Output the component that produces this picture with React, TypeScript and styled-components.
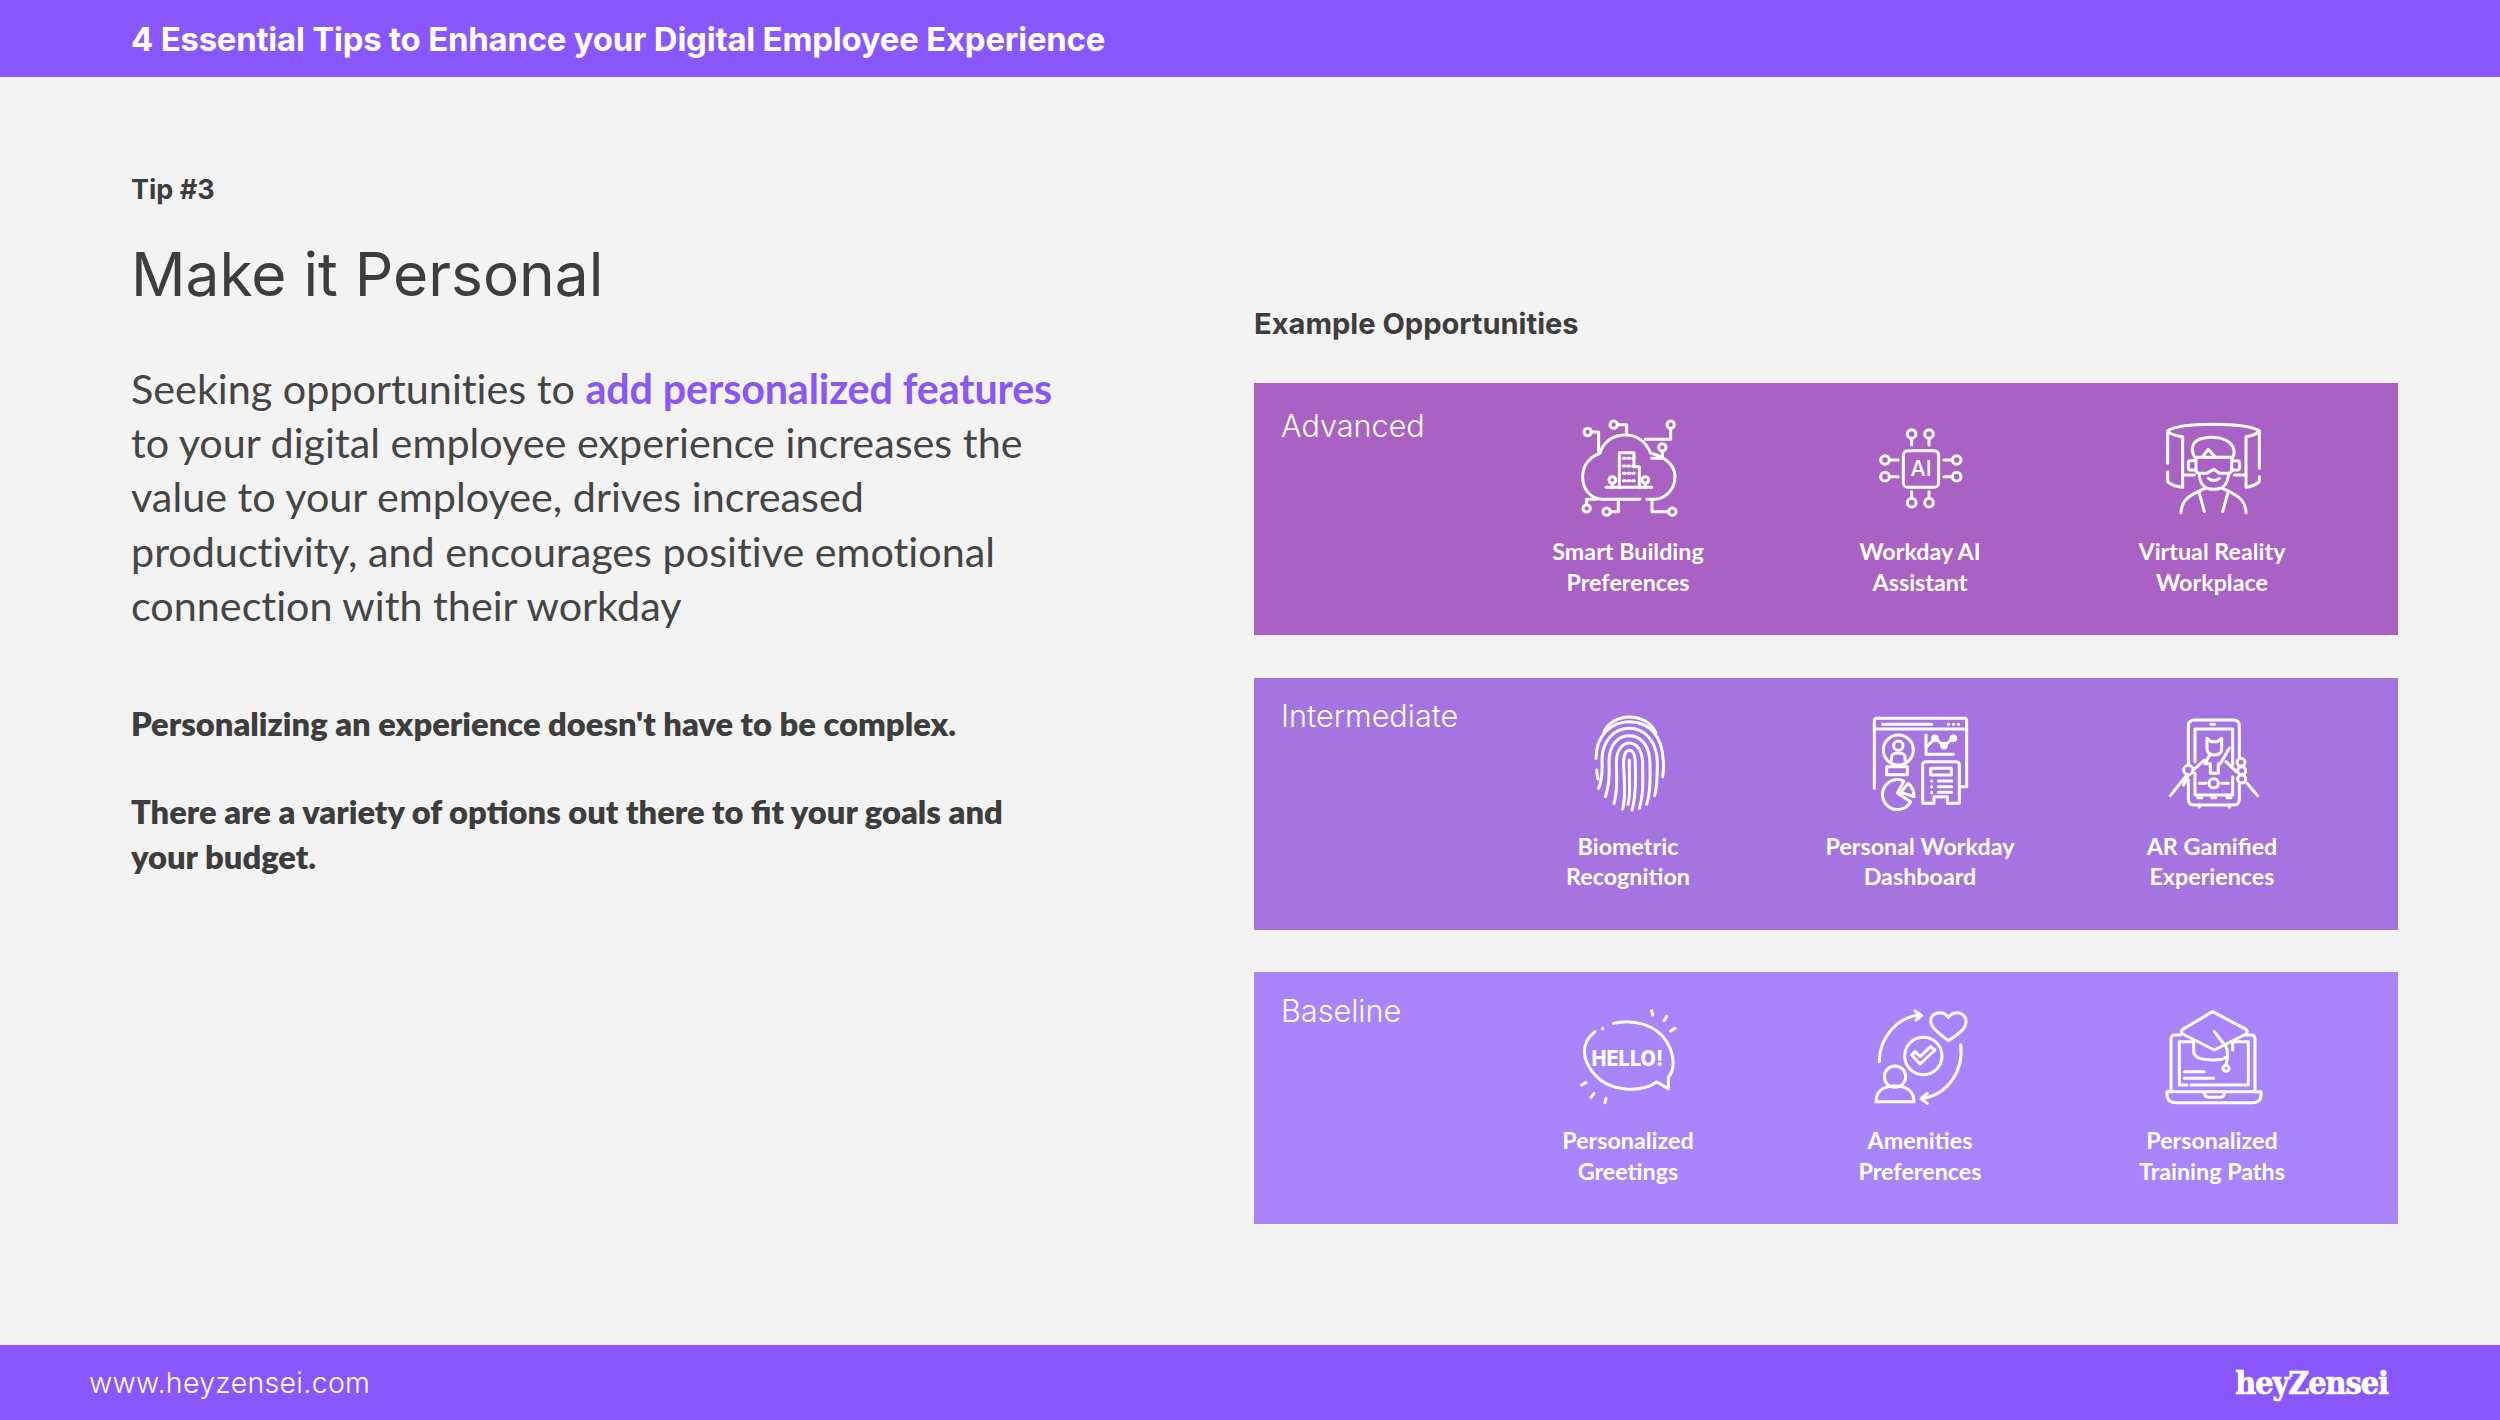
import React, { FC, ReactNode } from "react";
import styled, { createGlobalStyle } from "styled-components";

const GlobalStyle = createGlobalStyle`
  html, body {
    margin: 0;
    padding: 0;
    background: #f3f3f3;
  }
`;

// Icons are traced on a 480x360 grid (3 units per pixel)
const Icon: FC<{ x: number; y?: number; children: ReactNode }> = ({ x, y = 0, children }) => (
  <IconSvg viewBox={`${x} ${y} 480 360`}>{children}</IconSvg>
);

const CloudIcon = () => (
  <Icon x={24}>
    <path d="M300 268 H190 C150 268 128 235 128 200 C128 165 150 140 180 130 C190 95 220 75 255 75 C290 75 318 95 332 130 C375 140 405 165 405 200 C405 235 380 265 345 268 H320" />
    <circle cx={143} cy={66} r={11} />
    <path d="M154 66 H176 V125" />
    <circle cx={221} cy={44} r={11} />
    <path d="M232 44 H260 V72" />
    <circle cx={392} cy={44} r={11} />
    <path d="M392 55 V88 H316" />
    <circle cx={367} cy={112} r={11} />
    <path d="M367 123 V145 M335 145 H367" />
    <circle cx={140} cy={295} r={11} />
    <path d="M140 284 V268 H170" />
    <circle cx={200} cy={305} r={11} />
    <path d="M211 305 H235 V268" />
    <circle cx={397} cy={305} r={11} />
    <path d="M386 305 H336 V270" />
    <path d="M238 232 V128 H282 V170 H298 V232" />
    <path d="M198 232 H335" />
    <circle cx={217} cy={210} r={10} />
    <circle cx={316} cy={210} r={10} />
    <path d="M217 220 V232 M316 220 V232" />
    <path strokeDasharray="5 9" d="M250 145 H280 M250 168 H280 M250 190 H290 M250 212 H290" />
  </Icon>
);

const ChipIcon = () => (
  <Icon x={0}>
    <rect x={190} y={122} width={106} height={110} rx={14} />
    <IconText x={243} y={198} fontSize={64} fontWeight={500}>
      AI
    </IconText>
    <circle cx={215} cy={72} r={13} />
    <circle cx={267} cy={72} r={13} />
    <path d="M215 85 V105 M267 85 V105" />
    <circle cx={215} cy={278} r={13} />
    <circle cx={267} cy={278} r={13} />
    <path d="M215 245 V265 M267 245 V265" />
    <circle cx={135} cy={150} r={13} />
    <circle cx={135} cy={200} r={13} />
    <path d="M148 150 H175 M148 200 H175" />
    <circle cx={350} cy={150} r={13} />
    <circle cx={350} cy={200} r={13} />
    <path d="M312 150 H337 M312 200 H337" />
  </Icon>
);

const HeadsetIcon = () => (
  <Icon x={3}>
    <path d="M110 62 C150 36 340 36 385 62" />
    <path d="M110 160 V65 C125 75 140 78 155 80 V232 C135 230 120 225 110 215 V185" />
    <path d="M385 175 V65 C370 75 360 78 345 80 V232 C360 230 375 225 385 215 V200" />
    <path d="M190 140 C175 110 190 90 215 85 C240 78 290 80 305 110 C312 125 310 135 305 142" />
    <path d="M215 140 L232 118 L252 140" />
    <path d="M195 142 H302 V180 Q302 190 290 190 H265 L248 178 L228 190 H205 Q195 190 195 180 Z" />
    <path d="M192 152 H178 Q172 152 172 160 V172 Q172 180 178 180 H192" />
    <path d="M304 152 H318 Q326 152 326 160 V172 Q326 180 318 180 H304" />
    <path d="M205 192 C205 225 225 238 248 238 C272 238 292 225 292 192" />
    <path d="M232 205 Q248 218 265 205" />
    <path d="M155 195 H190 M310 195 H345" />
    <path d="M150 308 C152 265 180 255 222 235 M345 308 C343 265 315 255 275 235" />
    <path d="M205 250 L220 305 M290 250 L275 305" />
  </Icon>
);

const FingerprintIcon = () => (
  <Icon x={24}>
    <path d="M190 85 C215 20 322 20 348 85" />
    <path d="M168 160 C168 90 215 50 268 50 C325 50 368 90 370 170 C371 190 370 205 368 215" />
    <path d="M170 195 C171 205 172 215 174 222" />
    <path d="M176 250 C190 215 186 190 186 165 C186 105 225 70 268 70 C315 70 352 110 352 175 C352 215 352 245 344 272" />
    <path d="M196 275 C212 230 207 200 207 170 C207 118 235 92 268 92 C305 92 330 125 330 178 C330 225 332 260 320 298" />
    <path d="M222 296 C235 250 229 210 229 172 C229 135 248 114 268 114 C292 114 308 140 308 178 C308 225 312 265 298 310" />
    <path d="M248 312 C260 265 251 220 251 175 C251 150 258 136 268 136 C280 136 286 152 286 180 C286 225 290 270 276 315" />
    <path d="M268 165 V200 C268 240 272 270 264 298" />
  </Icon>
);

const DashboardIcon = () => (
  <Icon x={0}>
    <path d="M103 250 V48 Q103 40 112 40 H372 Q380 40 380 48 V245 H360" />
    <path d="M103 72 H380" />
    <path d="M128 58 H275" />
    <path strokeDasharray="1 14" d="M325 58 H356" />
    <circle cx={175} cy={135} r={45} />
    <circle cx={175} cy={122} r={14} />
    <path d="M155 165 V155 C155 140 195 140 195 155 V165" />
    <path d="M258 90 V148 H340" />
    <path d="M260 125 L285 100 L312 122 L340 100" />
    <circle cx={285} cy={100} r={7} />
    <circle cx={312} cy={122} r={7} />
    <circle cx={340} cy={100} r={7} />
    <rect x={140} y={185} width={62} height={24} />
    <path d="M172 265 L192 228 A45 45 0 1 0 212 290 Z" />
    <path d="M182 262 L205 235 Q222 250 222 275 Z" />
    <path d="M248 295 V180 Q248 170 258 170 H348 Q358 170 358 180 V295 H322 V275 H282 V295 Z" />
    <rect x={272} y={190} width={62} height={20} />
    <path strokeDasharray="1 16" d="M275 228 V265" />
    <path d="M295 228 H335 M295 245 H335 M295 262 H335" />
  </Icon>
);

const PhoneIcon = () => (
  <Icon x={3}>
    <path d="M172 175 V63 Q172 45 190 45 H307 Q325 45 325 63 V155 M325 240 V282 Q325 300 307 300 H190 Q172 300 172 282 V225" />
    <path d="M192 170 V72 H305 V180 M305 215 V270 H192 V205" />
    <path d="M240 58 H250" />
    <path d="M200 278 H212 M242 278 H254 M288 278 H300" />
    <path d="M205 300 V306 M295 300 V306" />
    <path d="M228 100 L240 110 H258 L272 100 V130 Q272 150 250 150 Q228 150 228 130 Z" />
    <path d="M235 152 L222 176 H238 V205 H262 V176 H268 L295 130" />
    <circle cx={248} cy={235} r={14} />
    <path d="M205 235 H225 M272 235 H292" />
    <circle cx={172} cy={195} r={14} />
    <path d="M166 212 L118 272 M172 210 L158 240 M220 165 L186 196" />
    <circle cx={330} cy={172} r={12} />
    <circle cx={332} cy={197} r={12} />
    <circle cx={332} cy={222} r={12} />
    <path d="M348 235 L380 272 M285 170 L316 200" />
  </Icon>
);

const GreetingIcon = () => (
  <Icon x={24} y={-3}>
    <path d="M220 70 C280 55 350 75 380 125 C405 165 405 210 385 232 L385 266 L350 246 C300 280 210 275 165 225 C125 180 120 130 165 95" />
    <path d="M188 85 V86" />
    <path d="M335 32 L338 45 M380 50 L372 62 M405 85 L392 93 M138 248 L125 255 M162 280 L153 292 M198 295 L195 308" />
    <IconText x={262} y={197} fontSize={64} fontWeight={800} textLength={215} lengthAdjust="spacingAndGlyphs">
      HELLO!
    </IconText>
  </Icon>
);

const AmenitiesIcon = () => (
  <Icon x={0} y={-3}>
    <path d="M118 185 C118 110 175 50 240 45 M225 33 L245 47 L228 60" />
    <path d="M325 122 C290 95 272 80 272 62 C272 45 288 38 300 38 C312 38 320 45 325 52 C330 45 340 38 352 38 C365 38 378 48 378 65 C378 85 360 100 325 122 Z" />
    <circle cx={250} cy={168} r={56} />
    <path d="M215 165 L225 155 L240 170 L272 140 L285 150 L240 192 Z" />
    <circle cx={165} cy={230} r={32} />
    <path d="M108 305 C108 270 135 258 165 258 C195 258 222 270 222 305 Z" />
    <path d="M362 135 C372 215 320 285 248 295 M262 280 L243 296 L262 310" />
  </Icon>
);

const LaptopIcon = () => (
  <Icon x={3} y={-3}>
    <path d="M148 105 H132 Q120 105 120 118 V275 M340 105 H360 Q372 105 372 118 V275" />
    <path d="M188 125 H145 V255 H168 M305 125 H352 V255 H180" />
    <path d="M108 275 H390 V285 Q390 308 365 308 H135 Q108 308 108 285 Z" />
    <path d="M220 278 Q222 292 235 292 H265 Q280 292 280 278" />
    <path d="M245 35 L345 88 Q352 95 345 102 L250 150 L155 102 Q148 95 155 88 Z" />
    <path d="M188 125 V155 Q190 180 245 180 Q280 180 283 172 M305 125 V150" />
    <path d="M250 95 L285 140 C295 165 288 180 285 195" />
    <circle cx={285} cy={205} r={9} />
    <path d="M160 215 H220 M160 235 H248" />
  </Icon>
);

interface Opportunity {
  icon: ReactNode;
  lines: [string, string];
}

interface Tier {
  name: string;
  color: string;
  labelTop: number;
  items: Opportunity[];
}

const tiers: Tier[] = [
  {
    name: "Advanced",
    color: "#a961c4",
    labelTop: 23,
    items: [
      { icon: <CloudIcon />, lines: ["Smart Building", "Preferences"] },
      { icon: <ChipIcon />, lines: ["Workday AI", "Assistant"] },
      { icon: <HeadsetIcon />, lines: ["Virtual Reality", "Workplace"] },
    ],
  },
  {
    name: "Intermediate",
    color: "#a674e0",
    labelTop: 18,
    items: [
      { icon: <FingerprintIcon />, lines: ["Biometric", "Recognition"] },
      { icon: <DashboardIcon />, lines: ["Personal Workday", "Dashboard"] },
      { icon: <PhoneIcon />, lines: ["AR Gamified", "Experiences"] },
    ],
  },
  {
    name: "Baseline",
    color: "#a985fb",
    labelTop: 19,
    items: [
      { icon: <GreetingIcon />, lines: ["Personalized", "Greetings"] },
      { icon: <AmenitiesIcon />, lines: ["Amenities", "Preferences"] },
      { icon: <LaptopIcon />, lines: ["Personalized", "Training Paths"] },
    ],
  },
];

const App: FC = () => (
  <Page>
    <GlobalStyle />
    <TopBar>4 Essential Tips to Enhance your Digital Employee Experience</TopBar>
    <Main>
      <LeftColumn>
        <TipLabel>Tip #3</TipLabel>
        <Title>Make it Personal</Title>
        <Lead>
          Seeking opportunities to <Highlight>add personalized features</Highlight>
          <br />
          to your digital employee experience increases the
          <br />
          value to your employee, drives increased
          <br />
          productivity, and encourages positive emotional
          <br />
          connection with their workday
        </Lead>
        <Note>
          Personalizing an experience doesn't have to be complex.
          <br />
          <br />
          There are a variety of options out there to fit your goals and
          <br />
          your budget.
        </Note>
      </LeftColumn>
      <RightColumn>
        <SectionTitle>Example Opportunities</SectionTitle>
        <PanelStack>
          {tiers.map((tier) => (
            <Panel key={tier.name} $color={tier.color}>
              <PanelLabel $top={tier.labelTop}>{tier.name}</PanelLabel>
              {tier.items.map((item) => (
                <Item key={item.lines.join(" ")}>
                  {item.icon}
                  <Caption>
                    {item.lines[0]}
                    <br />
                    {item.lines[1]}
                  </Caption>
                </Item>
              ))}
            </Panel>
          ))}
        </PanelStack>
      </RightColumn>
    </Main>
    <BottomBar>
      <SiteUrl>www.heyzensei.com</SiteUrl>
      <Logo>heyZensei</Logo>
    </BottomBar>
  </Page>
);

const Page = styled.div`
  width: 2500px;
  height: 1420px;
  display: flex;
  flex-direction: column;
  background: #f3f3f3;
  color: #3d3d3d;
  font-family: Inter, "Liberation Sans", sans-serif;
  overflow: hidden;
`;

const TopBar = styled.header`
  height: 77px;
  padding-left: 131px;
  display: flex;
  align-items: center;
  background: #8a57ff;
  color: #ffffff;
  font-size: 32.9px;
  font-weight: 700;
  letter-spacing: -0.2px;
`;

const Main = styled.main`
  flex: 1;
  display: grid;
  grid-template-columns: 1123px 1144px;
  padding-left: 131px;
`;

const LeftColumn = styled.section`
  padding-top: 95px;
`;

const TipLabel = styled.div`
  font-size: 27px;
  font-weight: 700;
  line-height: 36px;
`;

const Title = styled.h1`
  margin: 28px 0 0;
  font-size: 60.4px;
  font-weight: 400;
  line-height: 76px;
`;

const Lead = styled.p`
  margin: 49px 0 0;
  color: #454545;
  font-family: Lato, "Noto Sans", sans-serif;
  font-size: 41.3px;
  font-variant-ligatures: none;
  line-height: 54.2px;
  white-space: nowrap;
`;

const Highlight = styled.strong`
  color: #8a57f5;
  font-weight: 700;
  letter-spacing: -0.15px;
`;

const Note = styled.p`
  margin: 70px 0 0;
  font-family: Lato, "Noto Sans", sans-serif;
  font-size: 32.7px;
  font-weight: 800;
  line-height: 44.2px;
  white-space: nowrap;
`;

const RightColumn = styled.section`
  padding-top: 229px;
`;

const SectionTitle = styled.h2`
  margin: 0;
  font-size: 29.1px;
  font-weight: 700;
  line-height: 36px;
`;

const PanelStack = styled.div`
  margin-top: 41px;
  display: flex;
  flex-direction: column;
  gap: 42.5px;
`;

const Panel = styled.div<{ $color: string }>`
  height: 252px;
  padding-left: 27px;
  display: grid;
  grid-template-columns: 201px repeat(3, 292px);
  background: ${(p) => p.$color};
  color: #ffffff;
`;

const PanelLabel = styled.div<{ $top: number }>`
  padding-top: ${(p) => p.$top}px;
  font-size: 30.6px;
  font-weight: 300;
  line-height: 40px;
`;

const Item = styled.div`
  padding-top: 27px;
  display: flex;
  flex-direction: column;
  align-items: center;
`;

const IconSvg = styled.svg`
  display: block;
  width: 160px;
  height: 120px;
  fill: none;
  stroke: #ffffff;
  stroke-width: 9;
  stroke-linecap: round;
  stroke-linejoin: round;
`;

const IconText = styled.text`
  fill: #ffffff;
  stroke: none;
  font-family: Inter, "Liberation Sans", sans-serif;
  text-anchor: middle;
`;

const Caption = styled.div`
  margin-top: 6px;
  font-family: Lato, "Noto Sans", sans-serif;
  font-size: 23.3px;
  font-weight: 700;
  line-height: 30.5px;
  text-align: center;
  white-space: nowrap;
`;

const BottomBar = styled.footer`
  height: 75px;
  padding: 0 112px 0 89px;
  display: flex;
  align-items: center;
  justify-content: space-between;
  background: #8a57ff;
  color: #ffffff;
`;

const SiteUrl = styled.span`
  font-size: 28.5px;
  font-weight: 300;
  letter-spacing: 0.3px;
`;

const Logo = styled.span`
  font-family: "DejaVu Serif Condensed", "DejaVu Serif", serif;
  font-size: 32px;
  font-weight: 700;
  letter-spacing: -1px;
  -webkit-text-stroke: 0.7px #ffffff;
`;

export default App;
